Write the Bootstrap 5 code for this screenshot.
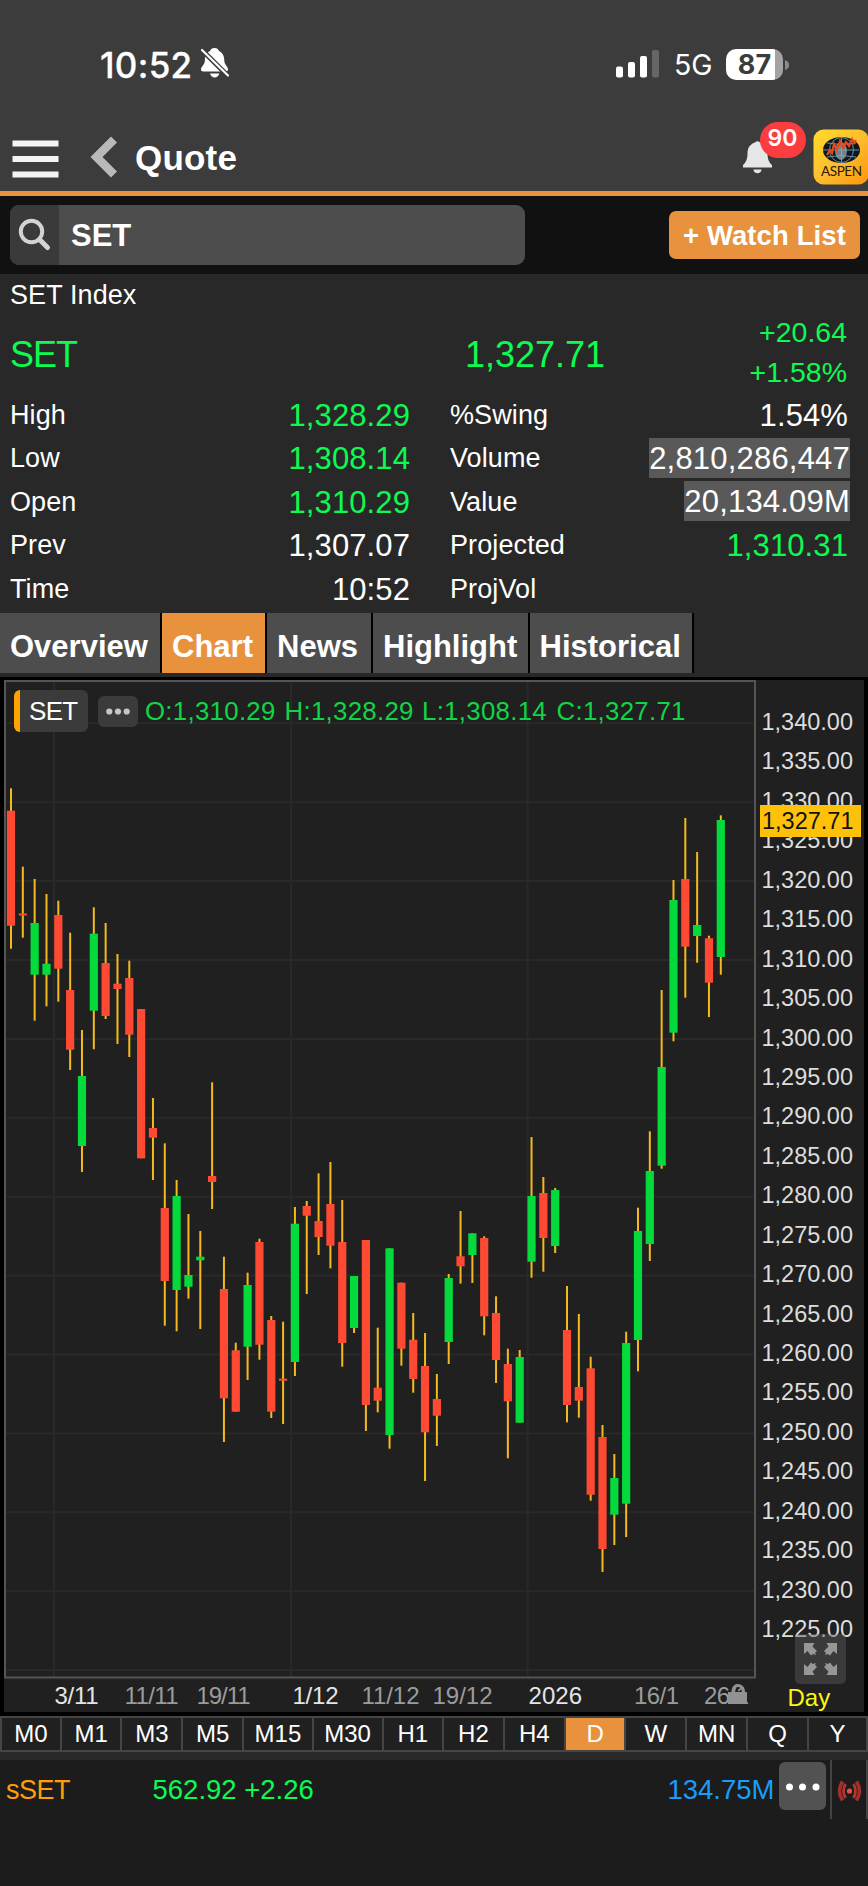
<!DOCTYPE html>
<html lang="en">
<head>
<meta charset="utf-8">
<meta name="viewport" content="width=device-width, initial-scale=1">
<title>Quote</title>
<link href="https://cdn.jsdelivr.net/npm/bootstrap@5.3.0/dist/css/bootstrap.min.css" rel="stylesheet">
<style>
  body { font-family: "Liberation Sans", Arial, sans-serif; background: #1c1c1c; color: #fff; width: 868px; overflow-x: hidden; }
  svg { display: block; }
  svg text { white-space: pre; }
  .up { color: #0dfa52; }
  .top-bar { height: 196px; background: #3c3c3c; border-bottom: 5px solid #e8923d; }
  .status { height: 122px; font-family: Inter, sans-serif; padding-top: 8px; }
  .clock { font-size: 35px; font-weight: 500; line-height: 1; margin-left: 100px; width: 94px; letter-spacing: .3px; -webkit-text-stroke: .3px #fff; }
  .net { font-size: 28.5px; line-height: 1; width: 52px; }
  .battery { width: 57px; height: 31px; border-radius: 10px; background: linear-gradient(90deg, #fff 49px, #a3a3a3 49px); color: #3c3c3c; font-size: 27px; font-weight: 700; line-height: 31px; margin-top: -1px; }
  .title-row { height: 69px; }
  .page-title { font-size: 35px; font-weight: 700; line-height: 71px; margin-left: 17px; letter-spacing: .2px; }
  .count-pill { left: 759.5px; top: 122px; width: 46px; height: 36px; border-radius: 18px; background: #fc3d40; font: 600 23px/33px Inter, sans-serif; }
  .search-row { height: 78px; background: #111; padding: 0 8px 1px 10px; }
  .search-box { width: 515px; height: 60px; border-radius: 9px; background: #4d4d4d; overflow: hidden; }
  .search-icon { width: 49px; height: 60px; background: #3a3a3a; padding: 13px 0 0 8px; }
  .search-text { font-size: 31px; font-weight: 700; line-height: 61px; padding-left: 12px; }
  .watch { width: 191px; height: 48px; padding: 0; border-radius: 7px; background: #e8923d; color: #fff; font-size: 27.5px; font-weight: 700; line-height: 49px; border: 0; white-space: nowrap; letter-spacing: .1px; }
  .info { height: 339px; background: #282828; padding: 0 10px; }
  .name-line { font-size: 27px; height: 42px; line-height: 42px; letter-spacing: .1px; }
  .headline { height: 77px; }
  .big { font-size: 36px; line-height: 77px; }
  .big-name { width: 455px; letter-spacing: -1px; }
  .chg { font-size: 28.5px; line-height: 39.5px; margin-top: -3px; padding-right: 11px; }
  .stat { height: 43.4px; font-size: 27px; line-height: 45.4px; letter-spacing: .1px; }
  .stat b { font-weight: 400; font-size: 31px; letter-spacing: .1px; }
  .stat .flash-bg { background: #595959; line-height: 42px; height: 40px; padding: 0; margin-right: -2px; letter-spacing: .2px; }
  .col-a { width: 400px; }
  .col-b { width: 398px; }
  .tabs { height: 64px; background: #282828; }
  .tabs a { height: 60px; background: #4d4d4d; border-right: 2px solid #000; color: #fff; text-decoration: none; font-size: 31px; font-weight: 700; line-height: 67px; padding-left: 10px; white-space: nowrap; }
  .tabs a.on { background: #e8923d; }
  .chart { height: 1039px; background: #000; padding: 3px 4px 4px; }
  .chart-in { background: #202020; height: 1032px; }
  .axis { width: 106px; padding: 23px 0 0 3.5px; font-size: 23.5px; color: #ddd; }
  .axis div { height: 39.45px; line-height: 39.45px; }
  .axis .unit { margin-top: 27px; padding-left: 26px; line-height: 41px; font-size: 24px; color: #f7f712; height: 40px; }
  .last-price { left: 756px; top: 125px; width: 101px; height: 31.5px; background: #fec10a; color: #111; font-size: 23.5px; line-height: 32px; padding-left: 2px; }
  .full { left: 791px; top: 954px; width: 51px; height: 50px; border-radius: 5px; background: rgba(90,90,90,.45); padding: 9px; }
  .legend-row { left: 10px; top: 10px; height: 42px; }
  .chip { width: 74px; height: 42px; border-radius: 6px; background: #3b3b3b; border-left: 6px solid #ffa303; font-size: 26px; line-height: 42px; padding-left: 9px; letter-spacing: -.7px; }
  .chip-dots { width: 40px; height: 31px; border-radius: 6px; background: #3b3b3b; margin: 1px 7.5px 0 9.5px; }
  .ohlc { color: #12d447; font-size: 25.8px; line-height: 41px; white-space: nowrap; letter-spacing: .3px; }
  .ohlc span { display: inline-block; }
  .periods { height: 36px; background: #202020; border-top: 2px solid #454545; border-bottom: 2px solid #454545; }
  .periods div { border-right: 2px solid #454545; font-size: 24px; line-height: 32px; text-align: center; }
  .periods div:first-child { border-left: 2px solid #454545; }
  .periods .on { background: #e8923d; }
  .gap-strip { height: 8px; background: #282828; }
  .ticker { height: 59px; font-size: 27px; line-height: 60px; }
  .more { width: 47px; height: 48px; border-radius: 6px; background: #525252; margin: 2px 4.5px 0 4px; padding: 0; border: 0; }
  .live { width: 38px; height: 59px; border-left: 2px solid #434343; border-right: 2px solid #434343; padding: 20px 0 0 5px; }
</style>
</head>
<body>
<header class="top-bar position-relative">
  <div class="status d-flex align-items-center">
    <div class="clock">10:52</div>
    <svg style="margin:-4px 0 0 7px" width="28" height="30" viewBox="0 0 28 30"><path fill="#fff" d="M13.500 0C16 0 17.300 1 18 3c4 2 5.200 5.400 5.300 9.500.1 4.500 3.700 6 3.700 9 0 1.400-1 1.900-2.200 1.900H2.200C1 23.400 0 22.900 0 21.500c0-3 3.700-4.500 3.900-9C4 8.400 5.200 5 9 3c.8-2 2-3 4.500-3zM9 25.500h9.400c-.6 2.400-2.300 3.900-4.700 3.900S9.600 27.900 9 25.500z"/><path d="M0 1l27 27" stroke="#3c3c3c" stroke-width="5"/><path d="M1 2l26 25.500" stroke="#fff" stroke-width="2.200" stroke-linecap="round"/></svg>
    <svg width="43" height="28" viewBox="0 0 43 28" style="margin:-3px 15px 0 387px"><g fill="#fff"><rect y="16.500" width="7" height="11" rx="2"/><rect x="12" y="12" width="7" height="15.500" rx="2"/><rect x="24" y="6" width="7" height="21.500" rx="2"/><rect x="36" width="7" height="27.500" rx="2" opacity=".22"/></g></svg>
    <div class="net">5G</div>
    <div class="battery text-center">87</div>
    <svg width="5" height="10" viewBox="0 0 5 10" style="margin-left:1.500px"><path d="M0 0q4 1.500 4 5t-4 5z" fill="#8b8b8b"/></svg>
  </div>
  <div class="title-row d-flex">
    <svg width="118" height="60" viewBox="0 0 118 60"><g fill="#f4f4f4"><rect x="12.500" y="18.500" width="46" height="6"/><rect x="12.500" y="34" width="46" height="6"/><rect x="12.500" y="49.500" width="46" height="6"/></g><path d="M114 17.500L96.500 35 114 52.500" fill="none" stroke="#b9b9b9" stroke-width="8.500"/></svg>
    <div class="page-title">Quote</div>
    <svg class="ms-auto" width="125" height="66" viewBox="0 0 125 66">
      <path fill="#e6e6e6" d="M12 20.500q2.500-2.500 5 0c6 2 7.500 6.500 7.500 11 0 6 2 9.500 4.500 11.500v2.500H0V43c2.500-2 4.500-5.500 4.500-11.500 0-4.500 1.500-9 7.500-11zM10.500 47.500h8c0 5-8 5-8 0z"/>
      <defs><linearGradient id="gold" x1="0" y1="0" x2="1" y2="1"><stop offset="0" stop-color="#ffdc2b"/><stop offset=".5" stop-color="#fcbd2e"/><stop offset="1" stop-color="#fd960f"/></linearGradient></defs>
      <rect x="70.500" y="7.500" width="55" height="55" rx="10" fill="url(#gold)"/>
      <ellipse cx="98.500" cy="28" rx="18.500" ry="13" fill="#10161c"/>
      <ellipse cx="98" cy="29" rx="6" ry="9" fill="#9db4bb" opacity=".7"/>
      <g fill="none" stroke="#76b2c8" stroke-width="1" opacity=".8"><ellipse cx="98.500" cy="28" rx="12" ry="12.500"/><path d="M80 28h36M84 21q14 3 29 0M84 35q14-3 29 0M98.500 15.500v25"/></g>
      <path d="M84 33l3-5 2 3 2-9 3 6 3-9 3 7 3-6 3 4 3-7 2 4 2-3" fill="none" stroke="#ee4417" stroke-width="2.200"/>
      <text x="78" y="54" font-family="Lato, sans-serif" font-size="13.500" textLength="41" fill="#28190a">ASPEN</text>
    </svg>
  </div>
  <div class="count-pill position-absolute text-center">90</div>
</header>

<section class="search-row d-flex align-items-center justify-content-between">
  <div class="search-box d-flex">
    <div class="search-icon"><svg width="34" height="34" viewBox="0 0 34 34"><circle cx="13.500" cy="13.500" r="10.700" fill="none" stroke="#d3d3d3" stroke-width="4"/><path d="M21.500 21.500l8 8" stroke="#d3d3d3" stroke-width="5" stroke-linecap="round"/></svg></div>
    <div class="search-text">SET</div>
  </div>
  <button class="btn watch">+ Watch List</button>
</section>

<section class="info">
  <div class="name-line">SET Index</div>
  <div class="headline d-flex">
    <div class="big big-name up">SET</div>
    <div class="big up">1,327.71</div>
    <div class="chg up text-end ms-auto">+20.64<br>+1.58%</div>
  </div>
  <div class="d-flex" style="gap:40px">
    <div class="col-a">
      <div class="stat d-flex justify-content-between"><span>High</span><b class="up">1,328.29</b></div>
      <div class="stat d-flex justify-content-between"><span>Low</span><b class="up">1,308.14</b></div>
      <div class="stat d-flex justify-content-between"><span>Open</span><b class="up">1,310.29</b></div>
      <div class="stat d-flex justify-content-between"><span>Prev</span><b>1,307.07</b></div>
      <div class="stat d-flex justify-content-between"><span>Time</span><b>10:52</b></div>
    </div>
    <div class="col-b">
      <div class="stat d-flex justify-content-between"><span>%Swing</span><b>1.54%</b></div>
      <div class="stat d-flex justify-content-between"><span>Volume</span><b class="flash-bg mt-auto mb-auto">2,810,286,447</b></div>
      <div class="stat d-flex justify-content-between"><span>Value</span><b class="flash-bg mt-auto mb-auto">20,134.09M</b></div>
      <div class="stat d-flex justify-content-between"><span>Projected</span><b class="up">1,310.31</b></div>
      <div class="stat"><span>ProjVol</span></div>
    </div>
  </div>
</section>

<nav class="tabs d-flex">
  <a href="#" style="width:162px">Overview</a>
  <a href="#" class="on" style="width:105px">Chart</a>
  <a href="#" style="width:106px">News</a>
  <a href="#" style="width:156.500px">Highlight</a>
  <a href="#" style="width:164.500px">Historical</a>
</nav>

<section class="chart">
  <div class="chart-in position-relative d-flex">
    <svg id="plot" width="754" height="1032" viewBox="4 680 754 1032" font-size="24"></svg>
    <div class="axis" id="axis"></div>
    <div class="last-price position-absolute">1,327.71</div>
    <div class="full position-absolute"><svg width="33" height="32" viewBox="0 0 33 32"><g fill="#979797"><path d="M0 0h10.500l-2 3.500 4.500 4.500-2 2 1 2-3-1-2 1.500L3.500 8 0 11z"/><path transform="matrix(-1 0 0 1 33 0)" d="M0 0h10.500l-2 3.500 4.500 4.500-2 2 1 2-3-1-2 1.500L3.500 8 0 11z"/><path transform="matrix(1 0 0 -1 0 32)" d="M0 0h10.500l-2 3.500 4.500 4.500-2 2 1 2-3-1-2 1.500L3.500 8 0 11z"/><path transform="matrix(-1 0 0 -1 33 32)" d="M0 0h10.500l-2 3.500 4.500 4.500-2 2 1 2-3-1-2 1.500L3.500 8 0 11z"/></g></svg></div>
    <div class="legend-row position-absolute d-flex align-items-center">
      <div class="chip">SET</div>
      <div class="chip-dots d-flex align-items-center justify-content-center"><svg width="24" height="7" viewBox="0 0 24 7"><g fill="#c6c6c6"><circle cx="3.300" cy="3.500" r="3.100"/><circle cx="12" cy="3.500" r="3.100"/><circle cx="20.700" cy="3.500" r="3.100"/></g></svg></div>
      <div class="ohlc"><span style="width:139.500px">O:1,310.29</span><span style="width:137.500px">H:1,328.29</span><span style="width:134.500px">L:1,308.14</span><span>C:1,327.71</span></div>
    </div>
  </div>
</section>

<div class="periods d-flex" id="periods"></div>
<div class="gap-strip"></div>
<footer class="ticker d-flex">
  <div style="width:152.500px;padding-left:6px;color:#ff9d0a;letter-spacing:-.5px">sSET</div>
  <div class="up" style="font-size:27.500px">562.92 +2.26</div>
  <div class="ms-auto" style="color:#1a9dfa;font-size:27.500px">134.75M</div>
  <button class="more"><svg width="47" height="48" viewBox="0 0 47 48"><g fill="#fff"><circle cx="10.500" cy="25" r="3.500"/><circle cx="23.500" cy="25" r="3.500"/><circle cx="37" cy="25" r="3.500"/></g></svg></button>
  <div class="live"><svg width="25" height="23" viewBox="0 0 25 23"><circle cx="12.500" cy="11" r="2.600" fill="#e8504c"/><g fill="none" stroke="#b83431" stroke-width="2.800"><path d="M8.500 4q-4 7 0 14M16.500 4q4 7 0 14"/><path d="M5.500 1.500q-6 9.500 0 19M19.500 1.500q6 9.500 0 19" stroke="#9f302e" stroke-width="3.600"/></g></svg></div>
</footer>

<script src="https://cdn.jsdelivr.net/npm/bootstrap@5.3.0/dist/js/bootstrap.bundle.min.js"></script>
<script>
// One entry per session: direction, wick top, body top, body bottom, wick bottom
const sessions = `R 788.3 810.7 925.7 948.7
R 866.7 913.5 915.5 937.7
G 879 923 974.7 1020.7
G 894 963.7 974.7 1006.3
R 900.7 915 968.7 1001.7
R 932.7 990 1049.7 1070
G 1030 1076 1146 1172
G 907.3 933.7 1010.7 1049.3
R 923 963 1016 1019
R 954 983.7 989 1044
R 960.7 978 1034.7 1057
R 1009 1009 1158.3 1158.3
R 1098 1128 1137.7 1180
R 1143.3 1208 1281 1325.7
G 1180 1196 1290 1331.3
G 1214 1275 1286.7 1298.7
G 1231 1256.7 1260.3 1329
R 1082.3 1176 1182 1209
R 1256.7 1289 1398.3 1442
R 1342.7 1350.3 1411.7 1411.7
G 1272.7 1285 1346.7 1380
R 1238.7 1242 1344.7 1359.7
R 1316 1320 1411.7 1418
R 1321.7 1378.7 1380.7 1424
G 1207 1223.7 1362 1376
R 1201 1206 1215.7 1294
R 1173.3 1221 1237 1255
R 1162 1204 1245.7 1268.3
R 1200 1242 1343 1366.7
G 1276 1276 1328 1333
R 1240 1240 1405 1431
R 1327.7 1387.7 1400.7 1412.3
G 1248.3 1248.3 1435 1448.7
R 1282.7 1282.7 1348.7 1365.7
R 1313 1339.7 1379 1392.7
R 1333 1366 1432.3 1481
R 1374 1399 1415.7 1446
G 1274 1278 1342 1364
R 1211 1256.3 1266.3 1283.7
G 1233.3 1233.3 1255 1283
R 1236.3 1238 1316.3 1335.3
R 1296.3 1313 1360 1383
R 1348.7 1364 1401.3 1458.3
G 1350 1357 1422.7 1422.7
G 1137 1196 1261.7 1277.7
R 1177 1193 1238 1271.7
G 1188 1190 1246 1253
R 1286 1330 1405 1422.3
R 1314 1387 1400.7 1417.7
R 1356.7 1368.3 1494.7 1500.7
R 1425 1437 1549 1572
G 1454 1478 1514.7 1545
G 1331.7 1343 1503.7 1537
G 1207.7 1231 1340 1371.3
G 1131.3 1171 1244 1261
G 990 1067 1165.7 1168.7
G 880 900 1032.7 1041.3
R 818 879 946.7 997.7
G 852 925 936 962.7
R 935.7 938.3 982.7 1017
G 815.3 820 957 974.7`.split('\n').map(r => r.split(' '));

let s = '<g stroke="#292929" stroke-width="2">';
for (let i = 0; i <= 12; i++) s += `<path d="M6 ${(723.3 + i * 78.9).toFixed(1)}H755"/>`;
for (const x of [54, 291, 527.7]) s += `<path d="M${x} 682V1677"/>`;
s += '</g><rect x="5" y="681" width="750" height="996.500" fill="none" stroke="#555" stroke-width="2"/>';
sessions.forEach(([dir, hi, top, bot, lo], i) => {
  const x = 11 + i * 11.83, body = dir === 'G' ? '#05da3c' : '#fe4a33';
  s += `<rect x="${(x - 1).toFixed(2)}" y="${hi}" width="2" height="${lo - hi}" fill="#f2ba1c"/>`;
  s += `<rect x="${(x - 4.1).toFixed(2)}" y="${top}" width="8.200" height="${bot - top}" fill="${body}"/>`;
});
for (const [x, t, w, main] of [[54.500,'3/11',44,1],[124.500,'11/11',54,0],[196.500,'19/11',54,0],[292.500,'1/12',46,1],[361.500,'11/12',58,0],[432.500,'19/12',60,0],[528.500,'2026',53.500,1],[634,'16/1',45,0],[704,'26/1',45,0]])
  s += `<text x="${x}" y="1704" textLength="${w}" fill="${main ? '#e4e4e4' : '#9b9b9b'}">${t}</text>`;
s += '<path d="M728 1692h19v12h-19z" fill="#929292"/><path d="M733 1693v-3q1-4.500 5-4.500 4 0 5.500 5v3" fill="none" stroke="#929292" stroke-width="2.800"/>';
document.getElementById('plot').innerHTML = s;

let a = '';
for (let p = 1340; p >= 1225; p -= 5) a += `<div>1,${p - 1000}.00</div>`;
a += '<div class="unit">Day</div>';
document.getElementById('axis').innerHTML = a;

const cells = [['M0',62],['M1',60.5],['M3',61],['M5',61],['M15',69.5],['M30',70],['H1',60.5],['H2',61],['H4',61],['D',60.5],['W',61],['MN',61],['Q',61],['Y',59]];
document.getElementById('periods').innerHTML = cells.map(([t, w]) => `<div class="${t === 'D' ? 'on' : ''}" style="width:${w}px">${t}</div>`).join('');
</script>
</body>
</html>
